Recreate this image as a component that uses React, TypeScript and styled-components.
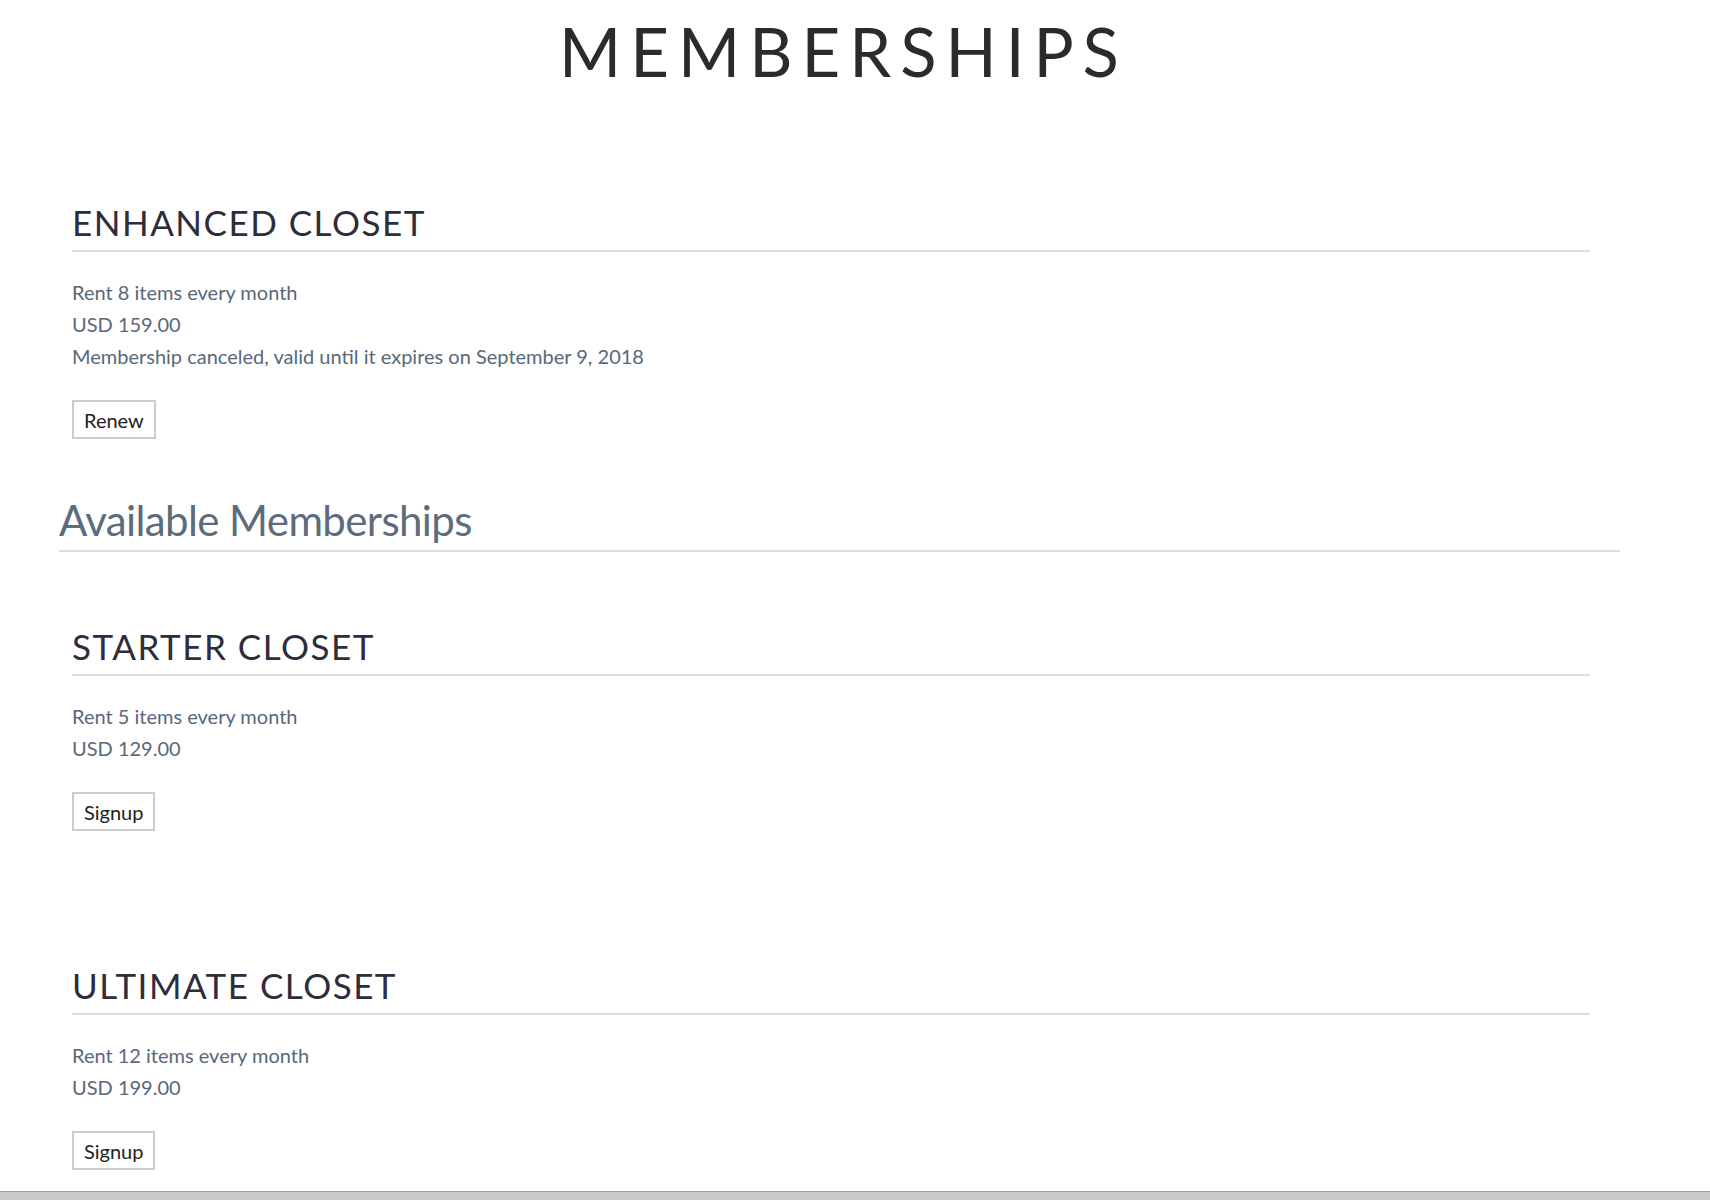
import * as React from "react";
import styled, { createGlobalStyle } from "styled-components";

const GlobalStyle = createGlobalStyle`
  html, body {
    margin: 0;
    padding: 0;
    background: #ffffff;
  }
`;

type membership = {
  name: string;
  items: number;
  price: string;
  note?: string;
  action: string;
};

const current: membership = {
  name: "Enhanced Closet",
  items: 8,
  price: "USD 159.00",
  note: "Membership canceled, valid until it expires on September 9, 2018",
  action: "Renew",
};

const available: membership[] = [
  { name: "Starter Closet", items: 5, price: "USD 129.00", action: "Signup" },
  { name: "Ultimate Closet", items: 12, price: "USD 199.00", action: "Signup" },
];

const Page = styled.div`
  height: 1200px;
  display: flex;
  flex-direction: column;
  font-family: "Lato", "Liberation Sans", sans-serif;
  overflow: hidden;
`;

const Main = styled.main`
  flex: 1;
`;

const PageTitle = styled.h1`
  margin: 0;
  padding: 18px 23px 0 0;
  text-align: center;
  font-family: "Lato", "Liberation Sans", sans-serif;
  font-weight: 400;
  font-size: 67px;
  line-height: 66px;
  letter-spacing: 9px;
  color: #2b2b2b;
`;

const Section = styled.section<{ $top?: number }>`
  width: 1561px;
  margin: ${(p) => p.$top || 0}px 0 0 59px;
`;

const SectionTitle = styled.h2`
  margin: 0;
  padding-bottom: 6px;
  border-bottom: 2px solid #dddddd;
  font-weight: 400;
  font-size: 42px;
  line-height: 48px;
  letter-spacing: -0.6px;
  color: #5b6c7c;
`;

const Card = styled.div<{ $gap: number }>`
  width: 1518px;
  margin: ${(p) => p.$gap}px 0 0 13px;
`;

const CardTitle = styled.h3`
  margin: 0;
  padding-bottom: 8px;
  border-bottom: 2px solid #dddddd;
  font-weight: 400;
  font-size: 35px;
  line-height: 40px;
  letter-spacing: 1.5px;
  text-transform: uppercase;
  color: #2d2d3b;
`;

const Details = styled.div`
  padding-top: 24px;
`;

const Line = styled.p`
  margin: 0;
  font-size: 20px;
  line-height: 32px;
  color: #58687a;
`;

const ActionButton = styled.button`
  margin-top: 28px;
  height: 39px;
  padding: 0 10px;
  background: #ffffff;
  border: 2px solid #cccccc;
  font-family: "Lato", "Liberation Sans", sans-serif;
  font-size: 20px;
  color: #222222;
  cursor: pointer;
`;

const Footer = styled.div`
  height: 8px;
  background: #c9c9c9;
  border-top: 1px solid #a0a0a0;
`;

const MembershipCard = (props: { m: membership; gap: number }) => {
  const { m, gap } = props;
  return (
    <Card $gap={gap}>
      <CardTitle>{m.name}</CardTitle>
      <Details>
        <Line>Rent {m.items} items every month</Line>
        <Line>{m.price}</Line>
        {m.note && <Line>{m.note}</Line>}
        <ActionButton>{m.action}</ActionButton>
      </Details>
    </Card>
  );
};

export default function App() {
  return (
    <>
      <GlobalStyle />
      <Page>
        <Main>
          <PageTitle>MEMBERSHIPS</PageTitle>
          <Section>
            <MembershipCard m={current} gap={118} />
          </Section>
          <Section $top={57}>
            <SectionTitle>Available Memberships</SectionTitle>
            <MembershipCard m={available[0]} gap={74} />
            <MembershipCard m={available[1]} gap={134} />
          </Section>
        </Main>
        <Footer />
      </Page>
    </>
  );
}
